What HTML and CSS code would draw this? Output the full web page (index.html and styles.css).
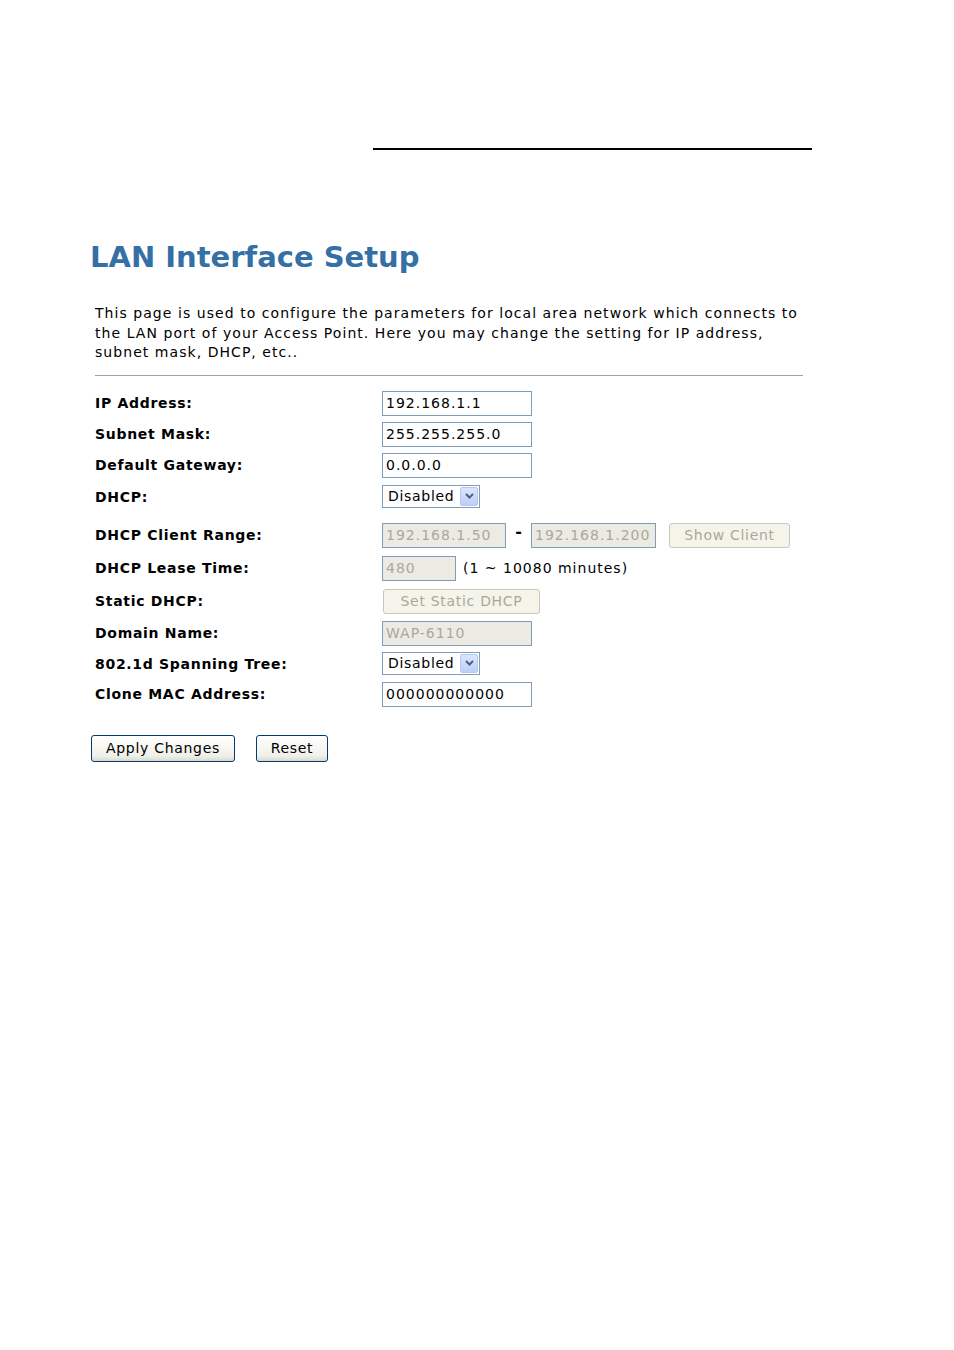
FILE: index.html
```html
<!DOCTYPE html>
<html>
<head>
<meta charset="utf-8">
<title>LAN Interface Setup</title>
<link rel="stylesheet" href="styles.css">
</head>
<body>
<div class="toprule"></div>
<div class="content">
  <h1 class="title">LAN Interface Setup</h1>
  <p class="desc">This page is used to configure the parameters for local area network which connects to the LAN port of your Access Point. Here you may change the setting for IP address, subnet mask, DHCP, etc..</p>
  <div class="divider"></div>
  <div class="form">
    <div class="row r31"><span class="label">IP Address:</span><span class="field w150">192.168.1.1</span></div>
    <div class="row r31"><span class="label">Subnet Mask:</span><span class="field w150">255.255.255.0</span></div>
    <div class="row r32"><span class="label">Default Gateway:</span><span class="field w150">0.0.0.0</span></div>
    <div class="row r38"><span class="label">DHCP:</span><span class="select"><span class="select-text">Disabled</span><span class="select-arrow"><svg width="9" height="6" viewBox="0 0 9 6"><path d="M1 1 L4.5 4.5 L8 1" fill="none" stroke="#4d6185" stroke-width="2"/></svg></span></span></div>
    <div class="row r33"><span class="label">DHCP Client Range:</span><span class="field disabled w124">192.168.1.50</span><span class="dash">-</span><span class="field disabled w125">192.168.1.200</span><span class="btn btn-disabled show-client">Show Client</span></div>
    <div class="row r33"><span class="label">DHCP Lease Time:</span><span class="field disabled w74">480</span><span class="hint">(1 ~ 10080 minutes)</span></div>
    <div class="row r32"><span class="label">Static DHCP:</span><span class="btn btn-disabled static-btn">Set Static DHCP</span></div>
    <div class="row r31"><span class="label">Domain Name:</span><span class="field disabled w150">WAP-6110</span></div>
    <div class="row r30"><span class="label">802.1d Spanning Tree:</span><span class="select"><span class="select-text">Disabled</span><span class="select-arrow"><svg width="9" height="6" viewBox="0 0 9 6"><path d="M1 1 L4.5 4.5 L8 1" fill="none" stroke="#4d6185" stroke-width="2"/></svg></span></span></div>
    <div class="row r25"><span class="label">Clone MAC Address:</span><span class="field w150">000000000000</span></div>
  </div>
  <div class="actions">
    <span class="btn btn-apply">Apply Changes</span>
    <span class="btn btn-reset">Reset</span>
  </div>
</div>
</body>
</html>
```
FILE: styles.css
```css
html, body {
  margin: 0;
  padding: 0;
  background: #ffffff;
}
body {
  font-family: "DejaVu Sans", Verdana, sans-serif;
  font-size: 14px;
  color: #000;
}
.toprule {
  margin: 148px 0 0 373px;
  width: 439px;
  height: 2px;
  background: #000;
}
.content {
  margin-left: 95px;
  width: 712px;
}
.title {
  margin: 90px 0 0 -5px;
  font-size: 29px;
  font-weight: bold;
  color: #3470a5;
  line-height: 34px;
  letter-spacing: 0;
}
.desc {
  margin: 30px 0 0 0;
  line-height: 19.5px;
  letter-spacing: 1.05px;
}
.divider {
  margin-top: 12px;
  width: 708px;
  height: 1px;
  background: #a0a0a0;
}
.form {
  margin-top: 15px;
  display: flex;
  flex-direction: column;
}
.row {
  display: flex;
  align-items: flex-start;
}
.r31 { height: 31px; }
.r32 { height: 32px; }
.r38 { height: 38px; }
.r33 { height: 33px; }
.r30 { height: 30px; }
.r25 { height: 25px; }
.label {
  width: 287px;
  flex: none;
  font-weight: bold;
  line-height: 25px;
  letter-spacing: 0.7px;
}
.field {
  box-sizing: border-box;
  height: 25px;
  border: 1px solid #7f9db9;
  background: #fff;
  padding-left: 3px;
  line-height: 23px;
  white-space: nowrap;
  overflow: hidden;
  letter-spacing: 1px;
}
.field.disabled {
  background: #ebebe4;
  color: #aca899;
}
.w150 { width: 150px; }
.w124 { width: 124px; }
.w125 { width: 125px; }
.w74 { width: 74px; }
.dash {
  width: 25px;
  text-align: center;
  font-weight: bold;
  font-size: 16px;
  line-height: 18px;
}
.hint {
  margin-left: 7px;
  line-height: 25px;
  letter-spacing: 1px;
}
.select {
  box-sizing: border-box;
  width: 98px;
  height: 23px;
  border: 1px solid #7f9db9;
  background: #fff;
  display: flex;
  align-items: center;
  padding: 1px;
}
.select-text {
  flex: 1;
  padding-left: 4px;
  line-height: 19px;
  letter-spacing: 0.7px;
  white-space: nowrap;
}
.select-arrow {
  box-sizing: border-box;
  width: 18px;
  height: 19px;
  background: linear-gradient(#dbe6fd, #bccff8);
  border: 1px solid #b5c7ef;
  border-radius: 2px;
  display: flex;
  align-items: center;
  justify-content: center;
  flex: none;
}
.btn {
  box-sizing: border-box;
  display: inline-flex;
  align-items: center;
  justify-content: center;
  height: 25px;
  border-radius: 3px;
  white-space: nowrap;
  letter-spacing: 0.7px;
}
.btn-disabled {
  border: 1px solid #c9c7ba;
  background: #f5f4ea;
  color: #aca899;
}
.show-client {
  width: 121px;
  margin-left: 13px;
}
.static-btn {
  width: 157px;
  margin-left: 1px;
}
.actions {
  margin: 28px 0 0 -4px;
  display: flex;
  gap: 21px;
}
.btn-apply, .btn-reset {
  height: 27px;
  border: 1px solid #003c74;
  background: linear-gradient(#ffffff, #f0f0ea 80%, #dcd8cc);
  color: #000;
}
.btn-apply { width: 144px; }
.btn-reset { width: 72px; }
```
